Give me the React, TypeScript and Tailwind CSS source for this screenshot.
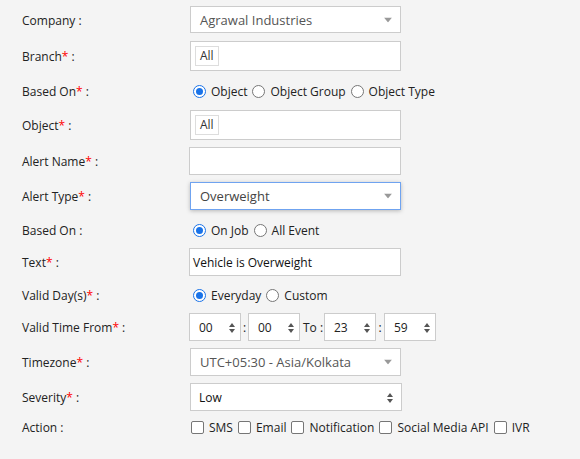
import React from 'react'

const font = { fontFamily: '"Open Sans", "Liberation Sans", sans-serif' }

function Label({ text, req }: { text: string; req?: boolean }) {
  return (
    <div className="w-[190px] shrink-0 pl-[22px] pt-[2px] text-[12px] text-[#222]">
      {text}
      {req && <span className="text-[#ff0000]">*</span>} :
    </div>
  )
}

function Caret() {
  return (
    <svg width="8" height="5" viewBox="0 0 8 5" className="absolute right-[8px] top-1/2 -translate-y-1/2">
      <path d="M0 0h8L4 5z" fill="#999" />
    </svg>
  )
}

function Spin() {
  return (
    <svg width="6" height="10" viewBox="0 0 6 10">
      <path d="M0 4L3 0l3 4z M0 6l3 4 3-4z" fill="#555" />
    </svg>
  )
}

function Radio({ on, text, first }: { on?: boolean; text: string; first?: boolean }) {
  return (
    <span className="flex items-center">
      <span
        className={`${first ? 'ml-[3px]' : 'ml-[5px]'} mr-[5px] flex h-[13px] w-[13px] items-center justify-center rounded-full border ${
          on ? 'border-[#1a73e8]' : 'border-[#767676]'
        } bg-white`}
      >
        {on && <span className="h-[7px] w-[7px] rounded-full bg-[#1a73e8]" />}
      </span>
      <span className="pt-[1px] text-[12px] text-[#222]">{text}</span>
    </span>
  )
}

function Check({ text }: { text: string }) {
  return (
    <span className="flex items-center">
      <span className="mr-[5px] ml-[1px] h-[13px] w-[13px] rounded-[2px] border border-[#767676] bg-white" />
      <span className="mr-[4px] pt-[1px] text-[12px] text-[#222]">{text}</span>
    </span>
  )
}

function TimeBox({ v }: { v: string }) {
  return (
    <div className="flex h-[28px] w-[52px] items-center justify-between border border-[#ccc] bg-white pl-[9px] pr-[5px] pt-[1px] text-[12px] text-[#222]">
      <span>{v}</span>
      <Spin />
    </div>
  )
}

export default function App() {
  return (
    <div className="min-h-[459px] w-[580px] bg-[#f4f4f4] pt-[6px]" style={font}>
      <div className="flex h-[27px] items-center">
        <Label text="Company" />
        <div className="relative flex h-[27px] w-[211px] items-center border border-[#ccc] bg-white pl-[9px] pt-[2px] text-[13px] text-[#555]">
          Agrawal Industries
          <Caret />
        </div>
      </div>

      <div className="mt-[8px] flex h-[30px] items-center">
        <Label text="Branch" req />
        <div className="flex h-[30px] w-[211px] items-center border border-[#ccc] bg-white pl-[4px]">
          <span className="flex h-[20px] items-center border border-[#ddd] px-[4px] text-[12px] text-[#333]">All</span>
        </div>
      </div>

      <div className="mt-[10px] flex h-[20px] items-center">
        <Label text="Based On" req />
        <Radio on first text="Object" />
        <Radio text="Object Group" />
        <Radio text="Object Type" />
      </div>

      <div className="mt-[9px] flex h-[30px] items-center">
        <Label text="Object" req />
        <div className="flex h-[30px] w-[211px] items-center border border-[#ccc] bg-white pl-[4px]">
          <span className="flex h-[20px] items-center border border-[#ddd] px-[4px] text-[12px] text-[#333]">All</span>
        </div>
      </div>

      <div className="mt-[7px] flex h-[28px] items-center">
        <Label text="Alert Name" req />
        <div className="-ml-[1px] h-[28px] w-[212px] border border-[#ccc] bg-white" />
      </div>

      <div className="mt-[7px] flex h-[28px] items-center">
        <Label text="Alert Type" req />
        <div className="relative flex h-[28px] w-[211px] items-center border border-[#6fa3f0] bg-white pl-[9px] pt-[2px] text-[13px] text-[#444] shadow-[0_1px_4px_rgba(0,0,0,0.25)]">
          Overweight
          <Caret />
        </div>
      </div>

      <div className="mt-[10px] flex h-[20px] items-center">
        <Label text="Based On" />
        <Radio on first text="On Job" />
        <Radio text="All Event" />
      </div>

      <div className="mt-[8px] flex h-[28px] items-center">
        <Label text="Text" req />
        <div className="-ml-[1px] flex h-[28px] w-[212px] items-center border border-[#ccc] bg-white pl-[3px] pt-[1px] text-[12px] text-[#111]">
          Vehicle is Overweight
        </div>
      </div>

      <div className="mt-[9px] flex h-[20px] items-center">
        <Label text="Valid Day(s)" req />
        <Radio on first text="Everyday" />
        <Radio text="Custom" />
      </div>

      <div className="mt-[8px] flex h-[28px] items-center">
        <Label text="Valid Time From" req />
        <div className="-ml-[1px] flex items-center text-[12px] text-[#222]">
          <TimeBox v="00" />
          <span className="w-[7px] pt-[1px] text-center">:</span>
          <TimeBox v="00" />
          <span className="w-[24px] pl-[3px] pt-[1px]">To :</span>
          <TimeBox v="23" />
          <span className="w-[8px] pt-[1px] text-center">:</span>
          <TimeBox v="59" />
        </div>
      </div>

      <div className="mt-[7px] flex h-[28px] items-center">
        <Label text="Timezone" req />
        <div className="relative flex h-[28px] w-[211px] items-center border border-[#ccc] bg-white pl-[9px] pt-[2px] text-[13px] text-[#555]">
          UTC+05:30 - Asia/Kolkata
          <Caret />
        </div>
      </div>

      <div className="mt-[7px] flex h-[28px] items-center">
        <Label text="Severity" req />
        <div className="relative flex h-[28px] w-[212px] items-center justify-between border border-[#ccc] bg-white pl-[8px] pr-[8px] pt-[1px] text-[12px] text-[#111]">
          Low
          <Spin />
        </div>
      </div>

      <div className="mt-[6px] flex h-[20px] items-center">
        <Label text="Action" />
        <Check text="SMS" />
        <Check text="Email" />
        <Check text="Notification" />
        <Check text="Social Media API" />
        <Check text="IVR" />
      </div>
    </div>
  )
}
